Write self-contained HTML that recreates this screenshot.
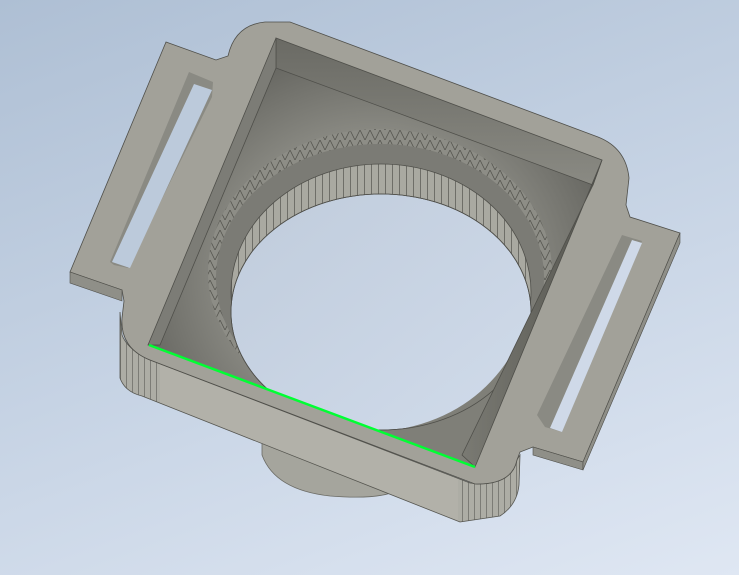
<!DOCTYPE html>
<html><head><style>
html,body{margin:0;padding:0;width:739px;height:575px;overflow:hidden}
body{background:linear-gradient(160deg,#aebfd4 0%,#c6d3e4 50%,#dfe7f3 100%);}
svg{position:absolute;left:0;top:0}
</style></head><body>
<svg width="739" height="575" viewBox="0 0 739 575" xmlns="http://www.w3.org/2000/svg">
<defs>
<pattern id="vl" width="6" height="10" patternUnits="userSpaceOnUse">
<rect width="6" height="10" fill="#adada5"/><line x1="0.5" y1="0" x2="0.5" y2="10" stroke="#7c7c76" stroke-width="1"/>
</pattern>
<pattern id="vl2" width="7" height="10" patternUnits="userSpaceOnUse">
<rect width="7" height="10" fill="#a9a9a1"/><line x1="0.5" y1="0" x2="0.5" y2="10" stroke="#6e6e68" stroke-width="1"/>
</pattern>
<pattern id="zz" width="10" height="10" patternUnits="userSpaceOnUse">
<rect width="10" height="10" fill="#8d8d86"/><path d="M0,0 L5,10 L10,0" stroke="#55554f" fill="none" stroke-width="0.8"/>
</pattern>
<radialGradient id="fl" cx="0.5" cy="0.55" r="0.6"><stop offset="0.5" stop-color="#8e8e87"/><stop offset="1" stop-color="#5c5c57"/></radialGradient>
<linearGradient id="bw" x1="0" y1="0" x2="0" y2="1"><stop offset="0" stop-color="#6a6a64"/><stop offset="1" stop-color="#8a8a83"/></linearGradient>
<linearGradient id="rw" x1="1" y1="0" x2="0" y2="0"><stop offset="0" stop-color="#55554f"/><stop offset="1" stop-color="#7a7a73"/></linearGradient>
<linearGradient id="bg2" x1="0" y1="0" x2="1" y2="1"><stop offset="0" stop-color="#c0ccdc"/><stop offset="1" stop-color="#d0dbea"/></linearGradient>
<clipPath id="cav"><polygon points="148,345 276,38 602,160 475,467"/></clipPath>
<clipPath id="fc"><path d="M120,312 L120,378 Q125,392 142,396 L460,522 L500,516 Q517,505 519,485 L520,455 L505,478 Q490,486 470,483 L150,360 Q128,350 122,335 Z"/></clipPath>
</defs>
<!-- bottom cylinder -->
<path d="M262,435 L262,455 Q275,490 330,496 Q380,500 398,490 L400,480 Z" fill="#a5a59d" stroke="#6a6a64" stroke-width="0.8"/>
<!-- front side wall -->
<path d="M120,312 L120,378 Q125,392 142,396 L460,522 L500,516 Q517,505 519,485 L520,455 L505,478 Q490,486 470,483 L150,360 Q128,350 122,335 Z" fill="#b2b1a9"/>
<g clip-path="url(#fc)">
<rect x="118" y="300" width="42" height="110" fill="url(#vl)"/>
<rect x="458" y="440" width="64" height="90" fill="url(#vl)"/>
</g>
<path d="M120,312 L120,378 Q125,392 142,396 L460,522 L500,516 Q517,505 519,485 L520,455 L505,478 Q490,486 470,483 L150,360 Q128,350 122,335 Z" fill="none" stroke="#55554f" stroke-width="0.8"/>
<!-- top face -->
<path d="M70,272 L166,42 L216,60 L228,56 Q235,25 265,22 L290,22 L598,137 Q626,148 629,178 L626,205 L630,217 L680,233 L583,462 L533,447 L520,452 L517,460 Q512,485 475,484 L150,360 Q120,348 122,318 L124,301 L122,290 Z" fill="#a2a199" stroke="#4f4f4a" stroke-width="0.8"/>
<!-- tab thickness -->
<polygon points="70,272 70,283 122,301 122,290" fill="#8f8f88" stroke="#4f4f4a" stroke-width="0.6"/>
<polygon points="583,462 583,470 533,455 533,447" fill="#8f8f88" stroke="#4f4f4a" stroke-width="0.6"/>
<polygon points="680,233 680,243 583,470 583,462" fill="#8f8f88" stroke="#4f4f4a" stroke-width="0.6"/>
<!-- slots -->
<polygon points="189,72 213,82 212,97 128,268 114,265 110,262 " fill="#8a8a83"/>
<polygon points="194,84 212,90 130,268 112,262" fill="#bccadb"/>
<polygon points="622,235 642,241 562,432 545,427 537,415" fill="#8a8a83"/>
<polygon points="632,240 642,243 562,432 550,428" fill="#cfd9e8"/>
<!-- cavity -->
<polygon points="148,345 276,38 602,160 475,467" fill="url(#fl)"/>
<g clip-path="url(#cav)">
<ellipse cx="380" cy="272" rx="172" ry="143" fill="url(#zz)"/>
<ellipse cx="380" cy="278" rx="164" ry="134" fill="#7b7b75"/>
<ellipse cx="381" cy="292" rx="150" ry="128" fill="url(#vl2)" stroke="#4f4f4a" stroke-width="0.8"/>
<ellipse cx="381" cy="312" rx="150" ry="118" fill="url(#bg2)" stroke="#4f4f4a" stroke-width="0.8"/>
<path d="M380,432 Q500,420 535,300 L600,300 L470,470 L300,470 Z" fill="#7f7f78"/>
<ellipse cx="381" cy="312" rx="150" ry="118" fill="none" stroke="#4f4f4a" stroke-width="0.8"/>
</g>
<polygon points="276,38 602,160 593,185 276,68" fill="url(#bw)" stroke="#4f4f4a" stroke-width="0.8"/>
<polygon points="276,38 276,68 160,345 148,345" fill="#7c7c76" stroke="#4f4f4a" stroke-width="0.8"/>
<polygon points="602,160 593,185 462,455 475,467" fill="url(#rw)" stroke="#4f4f4a" stroke-width="0.8"/>
<!-- green edge -->
<line x1="149" y1="345" x2="475" y2="467" stroke="#00ff33" stroke-width="2.5"/>
</svg>
</body></html>
